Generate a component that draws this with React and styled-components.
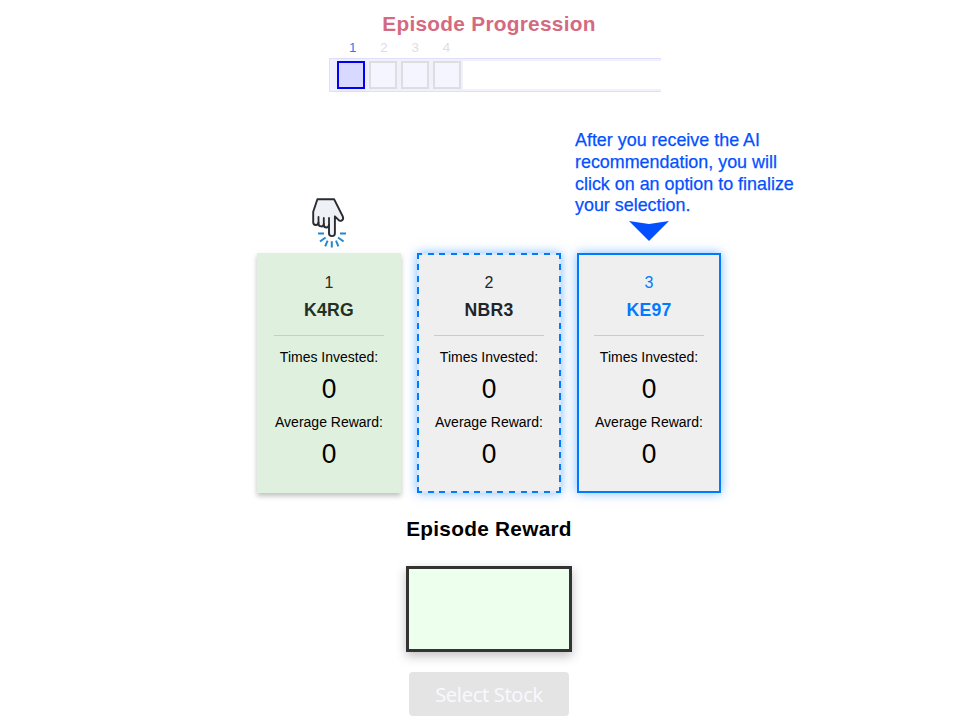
import React from "react";
import styled, { createGlobalStyle } from "styled-components";

const GlobalStyle = createGlobalStyle`
  *, *::before, *::after { box-sizing: border-box; }
  body { margin: 0; background: #fff; color: #000; font-family: "Liberation Sans", Arial, sans-serif; overflow: hidden; }
`;

const Page = styled.main`
  width: 974px;
  height: 723px;
  display: flex;
  flex-direction: column;
  align-items: center;
  padding: 12px 0 0 4px;
`;

const Heading = styled.h2`
  margin: 0;
  font-size: 20.8px;
  letter-spacing: 0.28px;
  line-height: 24px;
  font-weight: 700;
  color: ${(p) => p.$color || "#000"};
`;

const Progress = styled.section`
  width: 332px;
  margin-left: 12px;
`;

const Numbers = styled.div`
  display: flex;
  padding: 1px 0 0 8px;
  height: 22px;
`;

const StepNumber = styled.span`
  width: 31.3px;
  text-align: center;
  font-size: 13.33px;
  line-height: 22px;
  color: ${(p) => (p.$active ? "#1a82f7" : "#dedede")};
`;

const Track = styled.div`
  display: flex;
  height: 34px;
  border: 1px solid #dedeff;
  border-right: 0;
  background: #f0f0ff;
  padding: 2px 0;
`;

const Steps = styled.div`
  display: flex;
  gap: 4px;
  padding: 0 2px 0 7px;
`;

const Step = styled.div`
  width: 28px;
  height: 28px;
  border: 2px solid ${(p) => (p.$active ? "#0000f5" : "#dedede")};
  background: ${(p) => (p.$active ? "#d9d9ff" : "#f5f5ff")};
  box-shadow: ${(p) => (p.$active ? "0 0 10px rgba(0,0,0,.04)" : "none")};
`;

const Remaining = styled.div`
  flex: 1;
  background: #fff;
`;

const Guide = styled.section`
  width: 464px;
  height: 161px;
  display: flex;
  justify-content: space-between;
  align-items: flex-end;
`;

const Pointer = styled.svg`
  width: 40px;
  height: 54px;
  margin: 0 0 3px 52px;
`;

const Tip = styled.div`
  width: 146px;
  padding-bottom: 12px;
`;

const TipText = styled.p`
  width: 230px;
  margin: 0 0 4px;
  font-size: 17.9px;
  line-height: 21.67px;
  color: #0450ff;
  -webkit-text-stroke: 0.25px #0450ff;
`;

const Arrow = styled.svg`
  display: block;
  width: 40px;
  height: 20px;
  margin-left: 54px;
`;

const Cards = styled.section`
  display: flex;
  gap: 16px;
`;

const dash = (angle, half, period) =>
  `repeating-linear-gradient(${angle}, #007bff 0 ${half}px, #dbe7f3 ${half}px ${period - 1}px, #007bff ${period - 1}px ${period}px)`;

const looks = {
  chosen: `background:#dff0df;border-style:none;padding:19px 17px;box-shadow:0 3px 5px rgba(0,0,0,.25);`,
  dashed: `
    border-color: transparent;
    background:
      ${dash("90deg", 5, 11.64)} top / 100% 2px no-repeat border-box,
      ${dash("90deg", 5, 11.64)} bottom / 100% 2px no-repeat border-box,
      ${dash("180deg", 5.5, 11.75)} left / 2px 100% no-repeat border-box,
      ${dash("180deg", 5.5, 11.75)} right / 2px 100% no-repeat border-box,
      #efefef;
    background-origin: border-box;
    box-shadow: 0 0 10px rgba(0,123,255,.5);`,
  solid: `box-shadow:0 0 10px rgba(0,123,255,.5);`,
};

const CardBox = styled.article`
  width: 144px;
  height: 240px;
  padding: 17px 15px;
  border: 2px solid #007bff;
  background: #efefef;
  text-align: center;
  ${(p) => looks[p.$look]}
`;

const CardHead = styled.header`
  height: 64px;
  border-bottom: 1px solid #c9cdc9;
  color: ${(p) => p.$color};
`;

const CardNumber = styled.div`
  font-size: 16px;
  line-height: 22px;
`;

const CardName = styled.div`
  margin: 5px -10px 0;
  font-size: 17.6px;
  letter-spacing: 0.3px;
  line-height: 22px;
  font-weight: 700;
`;

const Label = styled.div`
  margin: ${(p) => (p.$first ? "12px" : "14px")} -10px 0;
  font-size: 14px;
  line-height: 18px;
  white-space: nowrap;
`;

const Value = styled.div`
  margin-top: 6px;
  height: 27px;
  font-size: 28px;
  line-height: 33px;
  transform: scaleX(0.94);
`;

const Reward = styled.section`
  display: flex;
  flex-direction: column;
  align-items: center;
  gap: 25px;
  margin-top: 24px;
`;

const RewardBox = styled.div`
  width: 166px;
  height: 86px;
  border: 3px solid #333;
  background: #edffed;
  box-shadow: 0 4px 10px rgba(0, 0, 0, 0.25);
`;

const SelectButton = styled.button`
  width: 160px;
  height: 44px;
  margin-top: 20px;
  padding: 1px 0 0;
  border: 0;
  border-radius: 4px;
  background: #e4e4e4;
  color: #f8f8ff;
  font: 400 20px/44px "Noto Sans", "Open Sans", sans-serif;
  letter-spacing: -0.3px;
`;

function PointingHand() {
  return (
    <Pointer viewBox="0 0 40 54" fill="none" strokeLinecap="round" strokeLinejoin="round">
      <path
        d="M8.4 3.3H25.2L33.8 20.5C35.2 24 31.6 26.3 29.2 23.6L25.9 20.3V37.3C25.9 41.1 20 41.1 20 37.3V28.6C19.8 32.6 15 32.4 14.8 28.9V27.9C14.6 31.4 9.7 31.2 9.5 27.7V26.6C9.3 29.8 4.2 29.8 4.2 26.2V15.8Z"
        fill="#eef2f7" stroke="#292b2e" strokeWidth="1.9"
      />
      <path d="M9.5 27v-6M14.8 28v-6M20 30v-8" stroke="#292b2e" strokeWidth="1.8" />
      <path
        d="M9 37.4h6M31 37.4h6M11 45.5l5.6-4M34.6 45.5l-5.6-4M16.2 50.4l2.4-5.8M22.8 51.5v-6.3M29.4 50.4l-2.4-5.8"
        stroke="#2588cf" strokeWidth="2" strokeLinecap="butt"
      />
    </Pointer>
  );
}

function Card({ number, name, look, color }) {
  return (
    <CardBox $look={look}>
      <CardHead $color={color}>
        <CardNumber>{number}</CardNumber>
        <CardName>{name}</CardName>
      </CardHead>
      <Label $first>Times Invested:</Label>
      <Value>0</Value>
      <Label>Average Reward:</Label>
      <Value>0</Value>
    </CardBox>
  );
}

export default function App() {
  return (
    <>
      <GlobalStyle />
      <Page>
        <Heading $color="#d46a80">Episode Progression</Heading>
        <Progress>
          <Numbers>
            {[1, 2, 3, 4].map((n) => <StepNumber key={n} $active={n === 1}>{n}</StepNumber>)}
          </Numbers>
          <Track>
            <Steps>
              {[1, 2, 3, 4].map((n) => <Step key={n} $active={n === 1} />)}
            </Steps>
            <Remaining />
          </Track>
        </Progress>
        <Guide>
          <PointingHand />
          <Tip>
            <TipText>
              After you receive the AI<br />recommendation, you will<br />click on an option to finalize<br />your selection.
            </TipText>
            <Arrow viewBox="0 0 40 20"><path d="M0 0 20 3 40 0 20 20Z" fill="#0450ff" /></Arrow>
          </Tip>
        </Guide>
        <Cards>
          <Card number={1} name="K4RG" look="chosen" color="#243024" />
          <Card number={2} name="NBR3" look="dashed" color="#212529" />
          <Card number={3} name="KE97" look="solid" color="#007bff" />
        </Cards>
        <Reward>
          <Heading>Episode Reward</Heading>
          <RewardBox />
        </Reward>
        <SelectButton>Select Stock</SelectButton>
      </Page>
    </>
  );
}
